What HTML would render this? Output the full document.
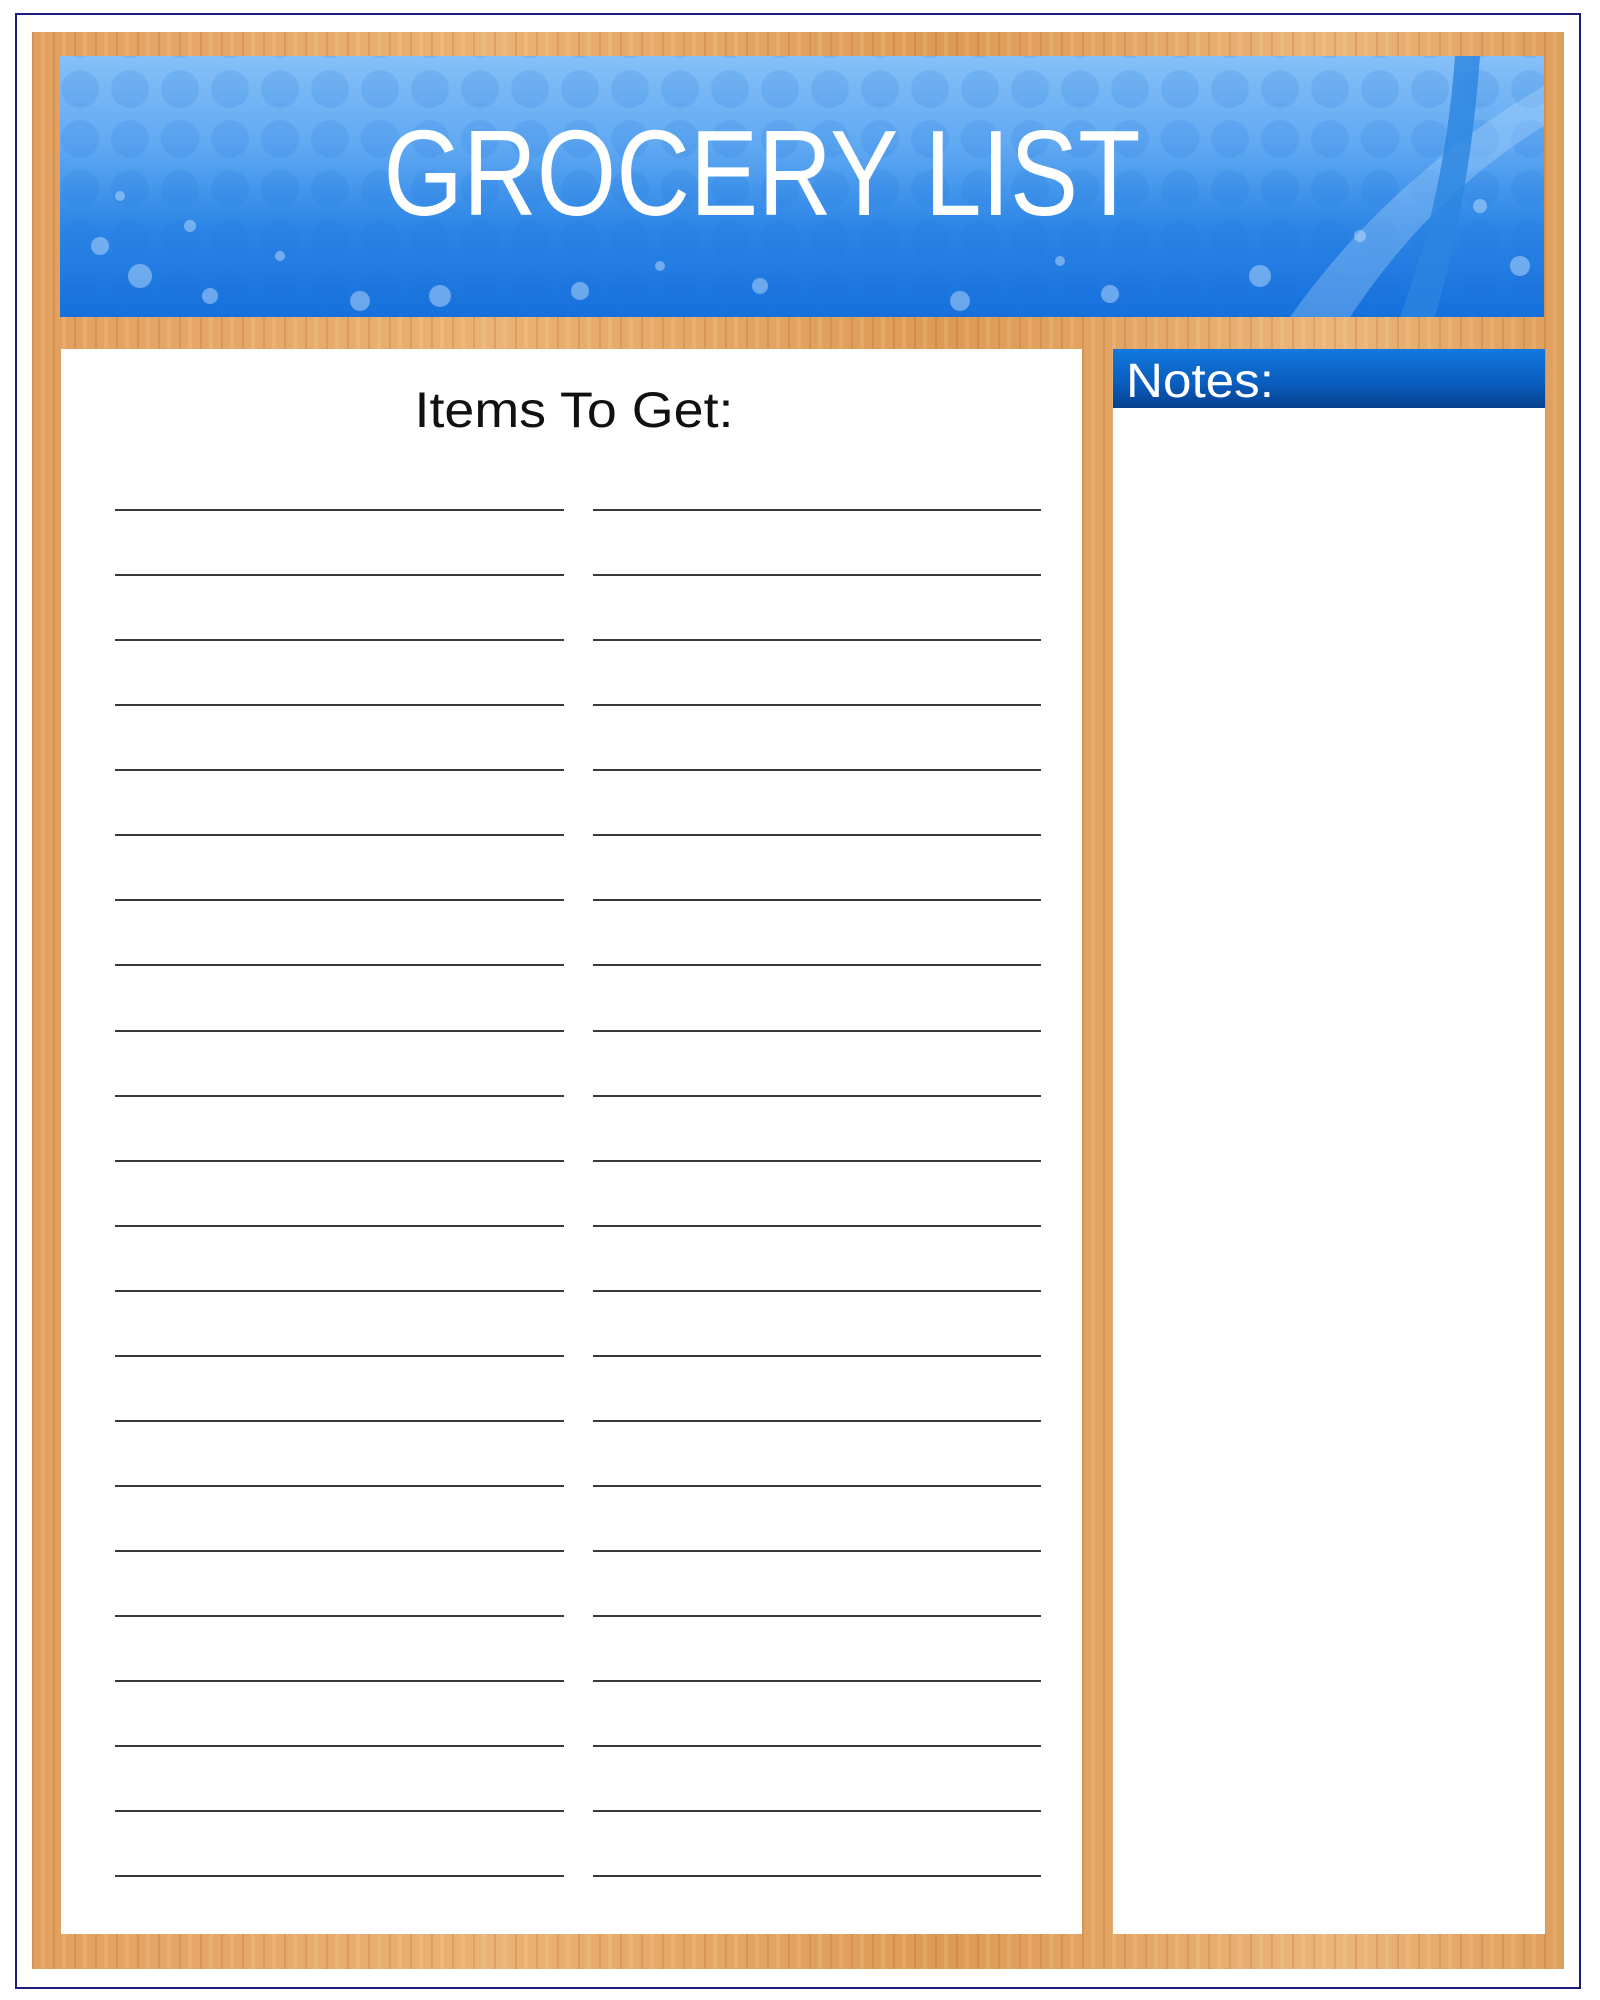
<!DOCTYPE html>
<html><head><meta charset="utf-8"><style>
html,body{margin:0;padding:0;background:#fff;}
body{width:1600px;height:2000px;position:relative;overflow:hidden;font-family:"Liberation Sans",sans-serif;}
.frame{position:absolute;left:15px;top:13px;width:1566px;height:1976px;border:2px solid #1c1c7a;box-sizing:border-box;}
.wood{position:absolute;left:32px;top:32px;width:1532px;height:1937px;
background:
repeating-linear-gradient(90deg,rgba(160,80,20,.18) 0 2px,transparent 2px 9px,rgba(255,230,180,.15) 9px 13px,transparent 13px 21px),
linear-gradient(90deg,#e2a060,#eab274 30%,#dd9a55 60%,#ebb57a 85%,#df9f5c);}
.banner{position:absolute;left:60px;top:56px;width:1484px;height:261px;overflow:hidden;
background:linear-gradient(180deg,#86c0f8 0%,#5fa8f2 35%,#2d86e6 65%,#1570dc 100%);}
.left{position:absolute;left:61px;top:349px;width:1021px;height:1585px;background:#fff;}
.notes{position:absolute;left:1113px;top:349px;width:432px;height:1585px;background:#fff;}
.nh{position:absolute;left:0;top:0;width:432px;height:59px;background:linear-gradient(180deg,#1278e0,#0a5cbc 60%,#05408e);}
.line{position:absolute;height:2px;background:#3a3a3a;}
</style></head><body>
<div class="frame"></div>
<div class="wood"></div>
<div class="banner">
<svg width="1484" height="261" style="position:absolute;left:0;top:0">
<defs>
<pattern id="dots" width="50" height="50" patternUnits="userSpaceOnUse" x="-5" y="8">
<circle cx="25" cy="25" r="19" fill="#1a6fd6" fill-opacity="0.15"/>
</pattern>
</defs>
<rect width="1484" height="261" fill="url(#dots)"/>
<path d="M1230 261 Q1330 120 1484 30 L1484 70 Q1370 140 1290 261Z" fill="#bfe0ff" fill-opacity="0.3"/>
<path d="M1395 0 L1420 0 Q1410 140 1375 261 L1340 261 Q1385 140 1395 0Z" fill="#2a84e0" fill-opacity="0.8"/>
<g fill="#cfe6ff" fill-opacity="0.45">
<circle cx="40" cy="190" r="9"/><circle cx="80" cy="220" r="12"/><circle cx="150" cy="240" r="8"/><circle cx="300" cy="245" r="10"/><circle cx="380" cy="240" r="11"/><circle cx="520" cy="235" r="9"/><circle cx="700" cy="230" r="8"/><circle cx="900" cy="245" r="10"/><circle cx="1050" cy="238" r="9"/><circle cx="1200" cy="220" r="11"/><circle cx="1460" cy="210" r="10"/><circle cx="60" cy="140" r="5"/><circle cx="130" cy="170" r="6"/><circle cx="220" cy="200" r="5"/><circle cx="600" cy="210" r="5"/><circle cx="1000" cy="205" r="5"/><circle cx="1300" cy="180" r="6"/><circle cx="1420" cy="150" r="7"/>
</g>
<text x="702" y="159" text-anchor="middle" font-family="Liberation Sans, sans-serif" font-size="122" fill="#fff" textLength="757" lengthAdjust="spacingAndGlyphs">GROCERY LIST</text>
</svg>
</div>
<div class="left">
<svg width="1021" height="120" style="position:absolute;left:0;top:0">
<text x="513" y="78" text-anchor="middle" font-family="Liberation Sans, sans-serif" font-size="50" fill="#111" textLength="319" lengthAdjust="spacingAndGlyphs">Items To Get:</text>
</svg>
</div>
<div class="notes"><div class="nh"></div>
<svg width="432" height="59" style="position:absolute;left:0;top:0"><text x="13" y="48" font-family="Liberation Sans, sans-serif" font-size="48" fill="#fff" textLength="148" lengthAdjust="spacingAndGlyphs">Notes:</text></svg>
</div>
<div id="lines"></div>
<script>
var h='';for(var i=0;i<22;i++){var y=Math.round(509+i*65.07);
h+='<div class="line" style="left:115px;width:449px;top:'+y+'px"></div><div class="line" style="left:593px;width:448px;top:'+y+'px"></div>';}
document.getElementById('lines').innerHTML=h;
</script>
</body></html>
